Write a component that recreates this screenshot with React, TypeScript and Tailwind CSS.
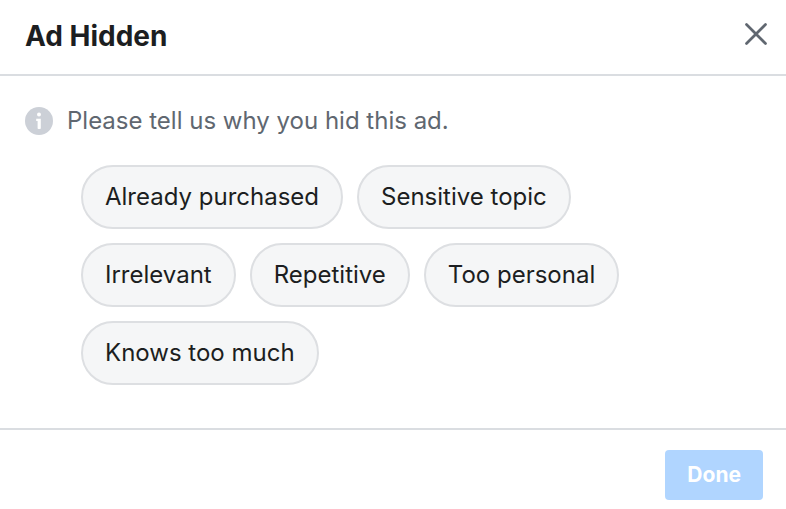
import React from 'react';

const reasons = [
  ['Already purchased', 'Sensitive topic'],
  ['Irrelevant', 'Repetitive', 'Too personal'],
  ['Knows too much'],
];

const InfoIcon = () => (
  <svg className="w-7 h-7 shrink-0" viewBox="0 0 28 28" aria-hidden="true">
    <circle cx="14" cy="14" r="14" fill="#ccd0d7" />
    <circle cx="14" cy="7.4" r="2" fill="#fff" />
    <path d="M11.2 11.8h4.6v9.4a.8.8 0 01-.8.8h-1.6a.8.8 0 01-.8-.8v-7.1h-1.4z" fill="#fff" />
  </svg>
);

const App = () => {
  return (
    <div
      role="dialog"
      aria-labelledby="dialog-title"
      className="bg-white font-['Inter',sans-serif] text-[#1c1e21]"
    >
      <header className="flex items-start justify-between h-[76px] pl-[25px] pr-3.5 pt-[18px] border-b-2 border-[#dadde1]">
        <h1 id="dialog-title" className="text-[28px] leading-9 font-bold">Ad Hidden</h1>
        <button type="button" aria-label="Close" className="p-1 text-[#606770]">
          <svg className="w-6 h-6" viewBox="0 0 24 24" fill="none" stroke="currentColor" strokeWidth="2.7" strokeLinecap="round">
            <path d="M2.5 2.5l19 19M21.5 2.5l-19 19" />
          </svg>
        </button>
      </header>

      <main className="px-[25px] pt-[29px] pb-[43px]">
        <div className="flex items-center gap-3.5 text-[#606770]">
          <InfoIcon />
          <p className="text-2xl">Please tell us why you hid this ad.</p>
        </div>
        <div className="flex flex-col gap-3.5 mt-7 pl-14">
          {reasons.map((row) => (
            <div key={row[0]} className="flex flex-wrap gap-3.5">
              {row.map((reason) => (
                <button
                  key={reason}
                  type="button"
                  className="h-16 px-[22px] rounded-full border-2 border-[#dddfe2] bg-[#f5f6f7] text-2xl"
                >
                  {reason}
                </button>
              ))}
            </div>
          ))}
        </div>
      </main>

      <footer className="flex justify-end border-t-2 border-[#dadde1] px-[23px] pt-5 pb-2">
        <button type="button" disabled className="h-[50px] px-[22px] rounded-sm bg-[#b0d5ff] text-[21px] leading-7 font-bold text-white">
          Done
        </button>
      </footer>
    </div>
  );
};

export default App;
